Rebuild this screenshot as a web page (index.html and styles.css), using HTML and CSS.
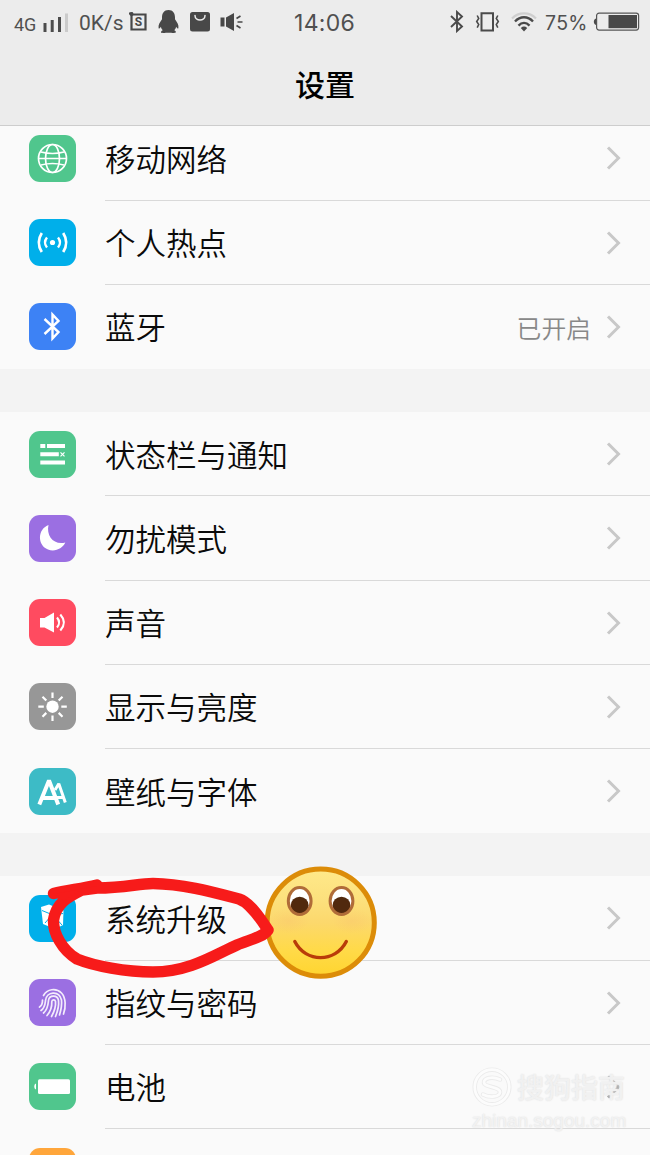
FILE: index.html
```html
<!DOCTYPE html>
<html lang="zh-CN">
<head>
<meta charset="utf-8">
<title>设置</title>
<link rel="stylesheet" href="styles.css">
</head>
<body>
<div class="phone">
  <header class="header">
    <div class="status">
      <div class="status-left">
        <span class="net">4G</span>
        <svg class="signal" width="26" height="20" viewBox="0 0 26 20"><path fill="#4c4c4c" d="M.5 10h3v9h-3zM7.700 7h3v12h-3zM15 4h3v15h-3z"/><path fill="#cbcbcb" d="M22 .5h3V19h-3z"/></svg>
        <span class="rate">0K/s</span>
        <svg class="shot" width="19" height="20" viewBox="0 0 19 20"><path d="M2.500 2.500h14v15h-14zM0 1.500h4" fill="none" stroke="#484848" stroke-width="2.200"/><circle cx="2.500" cy="2" r="2" fill="#484848"/><text x="9.500" y="14.300" text-anchor="middle" class="shot-s">S</text></svg>
        <svg class="qq" width="21" height="24" viewBox="0 0 21 24"><path fill="#484848" d="M10.500 0C6 0 4 3.300 4 7.500v1.700C2 12 0 15 .6 18c.2 1.200 1.500.1 2.200-1.300.3 1.500 1 2.700 2 3.600-2 .7-2.600 2.700.2 2.700 2.300 0 3.700-.2 5.500-.2s3.200.2 5.500.2c2.800 0 2.200-2 .2-2.700 1-.9 1.700-2.100 2-3.600.7 1.400 2 2.500 2.200 1.300.6-3-1.400-6-3.400-8.800V7.500C17 3.300 15 0 10.500 0z"/></svg>
        <svg class="bag" width="20" height="20" viewBox="0 0 20 20"><rect width="20" height="19.500" rx="2.500" fill="#484848"/><path d="M5 3.500c0 6 10 6 10 0" fill="none" stroke="#ececec" stroke-width="1.500" stroke-linecap="round"/></svg>
        <svg class="mute" width="23" height="20" viewBox="0 0 23 20"><path fill="#484848" d="M.5 5.500h4v9h-4zM6 5.500 14 1v18L6 14.500z"/><path d="m16.500 6.500 4-2.500M17.500 10h5M16.500 13.500l4 2.500" stroke="#484848" stroke-width="1.700" fill="none"/></svg>
      </div>
      <span class="clock">14:06</span>
      <div class="status-right">
        <svg class="bt" width="14" height="23" viewBox="0 0 14 23"><path d="m1 6 11 10.500-5 4.500V2l5 4.500L1 17" fill="none" stroke="#4a4a4a" stroke-width="1.900"/></svg>
        <svg class="vib" width="25" height="20" viewBox="0 0 25 20"><path d="M6.500 1.200h11.500v17.300H6.500z" fill="none" stroke="#4a4a4a" stroke-width="2"/><path d="m2.200 3.500 1.500 3-2 3 2 3-1.500 3.200M22.800 3.500l-1.500 3 2 3-2 3 1.500 3.200" fill="none" stroke="#4a4a4a" stroke-width="1.600"/></svg>
        <svg class="wifi" width="26" height="20" viewBox="0 0 26 20"><g fill="none"><path d="M1 6.500C7.500-.3 18.500-.3 25 6.500" stroke="#cfcfcf" stroke-width="2.200"/><path d="M4 9.500C9.100 3.800 16.900 3.800 22 9.500M7.500 13.600c3.300-3.600 7.700-3.600 11 0" stroke="#4a4a4a" stroke-width="2.300"/></g><path d="M9.800 16c2-1.900 4.400-1.900 6.400 0L13 19.500z" fill="#4a4a4a"/></svg>
        <span class="pct">75%</span>
        <svg class="batt" width="47" height="20" viewBox="0 0 47 20"><path d="M3 6.500v6.500C.1 12.500.1 7 3 6.500z" fill="#4a4a4a"/><rect x="3.600" y="1.100" width="42" height="17" rx="2.500" fill="none" stroke="#555" stroke-width="1.200"/><path d="M15.500 3h28.500v13.200H15.500z" fill="#484848"/></svg>
      </div>
    </div>
    <h1 class="title">设置</h1>
  </header>

  <main class="list">
    <section class="group">
      <div class="row"><svg class="icon" viewBox="0 0 47 47"><rect class="green" width="47" height="47" rx="11"/><g fill="none" stroke="#fff" stroke-width="1.700"><circle cx="23.500" cy="23.500" r="14"/><ellipse cx="23.500" cy="23.500" rx="7" ry="14"/><path d="M9.500 23.500h28M12 17q11.500 3 23 0M12 30q11.500-3 23 0"/></g></svg><div class="cell"><span class="name">移动网络</span><svg class="chev" viewBox="0 0 16 24"><path d="m2 1.500 10.500 10.500L2 22.500"/></svg></div></div>
      <div class="row"><svg class="icon" viewBox="0 0 47 47"><rect class="cyan" width="47" height="47" rx="11"/><circle cx="23.500" cy="23.500" r="2.600" fill="#fff"/><g fill="none" stroke="#fff" stroke-width="2.400"><path d="M18 18.500q-4 5 0 10M29 18.500q4 5 0 10"/><path stroke-width="2.700" d="M12.800 14q-6 9.500 0 19M34.200 14q6 9.500 0 19"/></g></svg><div class="cell"><span class="name">个人热点</span><svg class="chev" viewBox="0 0 16 24"><path d="m2 1.500 10.500 10.500L2 22.500"/></svg></div></div>
      <div class="row"><svg class="icon" viewBox="0 0 47 47"><rect class="blue" width="47" height="47" rx="11"/><path d="m15.500 16 14 13-6 6.500V11.500l6 6.500-14 13" fill="none" stroke="#fff" stroke-width="2.400"/></svg><div class="cell"><span class="name">蓝牙</span><span class="value">已开启</span><svg class="chev" viewBox="0 0 16 24"><path d="m2 1.500 10.500 10.500L2 22.500"/></svg></div></div>
    </section>

    <section class="group">
      <div class="row"><svg class="icon" viewBox="0 0 47 47"><rect class="green" width="47" height="47" rx="11"/><path fill="#fff" d="M11.300 13h5v4h-5zM18 13h18v4H18zM11.300 21.300h18.500v4H11.300zM11.300 29.500H36v4H11.300z"/><path d="m31.500 21.300 4 4m0-4-4 4" stroke="#fff" stroke-width="1.200"/></svg><div class="cell"><span class="name">状态栏与通知</span><svg class="chev" viewBox="0 0 16 24"><path d="m2 1.500 10.500 10.500L2 22.500"/></svg></div></div>
      <div class="row"><svg class="icon" viewBox="0 0 47 47"><rect class="purple" width="47" height="47" rx="11"/><path fill="#fff" d="M19.500 10C8 14.500 8.500 30.500 19 34.500c7 2.700 14.500-1 17.300-7C25 30.500 17 21 19.500 10z"/></svg><div class="cell"><span class="name">勿扰模式</span><svg class="chev" viewBox="0 0 16 24"><path d="m2 1.500 10.500 10.500L2 22.500"/></svg></div></div>
      <div class="row"><svg class="icon" viewBox="0 0 47 47"><rect class="red" width="47" height="47" rx="11"/><path fill="#fff" d="M11 19h4.500l9.500-5.500v20L15.500 28.500H11z"/><path d="M28 18.500q4.200 5 0 10M31.300 15.500q7.200 8 0 16" fill="none" stroke="#fff" stroke-width="2.100"/></svg><div class="cell"><span class="name">声音</span><svg class="chev" viewBox="0 0 16 24"><path d="m2 1.500 10.500 10.500L2 22.500"/></svg></div></div>
      <div class="row"><svg class="icon" viewBox="0 0 47 47"><rect class="grey" width="47" height="47" rx="11"/><circle cx="23.500" cy="23.700" r="6.200" fill="#fff"/><path d="M23.500 9.500V15m0 17.500V38M9.300 23.700h5.500m17.500 0h5.500M13.500 13.700l3.800 3.800m12.400 12.400 3.800 3.800m0-20-3.800 3.800M17.300 29.900l-3.800 3.800" stroke="#fff" stroke-width="2.200"/></svg><div class="cell"><span class="name">显示与亮度</span><svg class="chev" viewBox="0 0 16 24"><path d="m2 1.500 10.500 10.500L2 22.500"/></svg></div></div>
      <div class="row"><svg class="icon" viewBox="0 0 47 47"><rect class="teal" width="47" height="47" rx="11"/><g fill="none" stroke="#fff" stroke-linejoin="bevel"><path stroke-width="4" d="m10.300 36.500 9.700-24 9.200 24M13.500 30h13"/><path stroke-width="3" d="m26 22 3.800-6.300 6.500 18.800M27.500 29.500h7"/></g></svg><div class="cell"><span class="name">壁纸与字体</span><svg class="chev" viewBox="0 0 16 24"><path d="m2 1.500 10.500 10.500L2 22.500"/></svg></div></div>
    </section>

    <section class="group">
      <div class="row"><svg class="icon" viewBox="0 0 47 47"><rect class="cyan" width="47" height="47" rx="11"/><path fill="#fff" d="m12 12 8-2.500 14.500 6-.5 14.500-8 4-12-5z"/><path d="m13 15.500 11 4.500 10-1.500M24 20l9 10M23 20l-7 8" fill="none" stroke="#00afea"/></svg><div class="cell"><span class="name">系统升级</span><svg class="chev" viewBox="0 0 16 24"><path d="m2 1.500 10.500 10.500L2 22.500"/></svg></div>
        <svg class="doodle" width="340" height="120" viewBox="45 862 340 120">
          <defs>
            <linearGradient id="face" x1="0" y1="0" x2="0" y2="1"><stop offset="0" stop-color="#ffe98a"/><stop offset=".3" stop-color="#fce07c"/><stop offset=".5" stop-color="#fcd86c"/><stop offset=".75" stop-color="#ffda49"/><stop offset="1" stop-color="#ffd52f"/></linearGradient>
            <radialGradient id="blush"><stop offset="0" stop-color="#f8bd6c" stop-opacity=".3"/><stop offset="1" stop-color="#f8bd6c" stop-opacity="0"/></radialGradient>
          </defs>
          <circle cx="320.700" cy="922.700" r="53.600" fill="url(#face)" stroke="#dc8c08" stroke-width="5"/>
          <ellipse cx="289" cy="921" rx="20" ry="13" fill="url(#blush)"/><ellipse cx="352" cy="921" rx="20" ry="13" fill="url(#blush)"/>
          <g fill="#fff"><ellipse cx="299.700" cy="901" rx="11.700" ry="13.500"/><ellipse cx="341.500" cy="901" rx="11.700" ry="13.500"/></g>
          <circle cx="299.700" cy="905.700" r="9" fill="#51290e"/><circle cx="341.500" cy="905.700" r="9" fill="#51290e"/>
          <g fill="none" stroke="#b06c38" stroke-width="3"><ellipse cx="299.700" cy="901" rx="11.400" ry="13.500"/><ellipse cx="341.500" cy="901" rx="11.400" ry="13.500"/></g>
          <path d="M294.800 941.500c11 21.500 40.500 21.500 51.500 0" fill="none" stroke="#b93b09" stroke-width="3.400" stroke-linecap="round"/>
          <path d="M53.500 893.500C67 890 80 889 97 885L97 888C125 888 138 883.500 153 883.500C185 884 216 893 239 899C251 903 262 921 268 930C262 938 248 940 237 945C216 954 190 972 153 972C126 972 94 966 77 959C62 950 53 933 53.500 920C56 904 66 898 82 890L97 888" fill="none" stroke="#f71b1a" stroke-width="11.400" stroke-linecap="round" stroke-linejoin="round"/>
          <path d="M53.500 894 97 886 82 889 64 901z" fill="#f71b1a"/>
        </svg>
      </div>
      <div class="row"><svg class="icon" viewBox="0 0 47 47"><rect class="purple" width="47" height="47" rx="11"/><g fill="none" stroke="#f3ecfc" stroke-width="1.700" stroke-linecap="round"><path d="M14.500 16.500C18 10 27 8.500 32.500 14c4.500 5 4.500 14 2 21"/><path d="M10.500 28q3-1.500 3-7"/><path d="M12 31.500c4-3 4-6 4.500-10C17.500 12.500 30 11 32.500 21c.7 6-.5 10-2 15"/><path d="M14.500 34c4.500-4 4.500-8 5-12.500.6-5.500 9-6 10 0 .8 6-1 11-3 16"/><path d="M18 36.500c4-4.500 5-10 4.800-14 .1-2.300 3.300-2.300 3.700 0 .5 5-1.500 10.500-4 15"/></g></svg><div class="cell"><span class="name">指纹与密码</span><svg class="chev" viewBox="0 0 16 24"><path d="m2 1.500 10.500 10.500L2 22.500"/></svg></div></div>
      <div class="row"><svg class="icon" viewBox="0 0 47 47"><rect class="green" width="47" height="47" rx="11"/><rect x="9" y="16.200" width="32" height="14.800" rx="1.500" fill="#fff"/><path d="M7 20.500v6c-2.300-.5-2.300-5.500 0-6z" fill="#fff"/></svg><div class="cell"><span class="name">电池</span><svg class="chev dark" viewBox="0 0 16 24"><path d="m2 1.500 10.500 10.500L2 22.500"/></svg></div>
        <div class="mark">
          <div class="mark-top"><svg width="40" height="40" viewBox="0 0 40 40"><g fill="none" stroke-linecap="round"><g stroke="#ebebeb" stroke-width="4.500"><circle cx="20" cy="20" r="17.300"/><path d="M28 12.500C20 9 12 11 12 15.500c0 5 16 4 16 9.500 0 5-10 6-17 2.500"/></g><g stroke="#fcfcfc" stroke-width="2.700"><circle cx="20" cy="20" r="17.300"/><path d="M28 12.500C20 9 12 11 12 15.500c0 5 16 4 16 9.500 0 5-10 6-17 2.500"/></g></g></svg><span class="mark-cn">搜狗指南</span></div>
          <div class="mark-url">zhinan.sogou.com</div>
        </div>
      </div>
      <div class="row"><svg class="icon" viewBox="0 0 47 47"><rect class="orange" width="47" height="47" rx="11"/></svg><div class="cell"></div></div>
    </section>
  </main>
</div>
</body>
</html>
```
FILE: styles.css
```css
* { box-sizing: border-box; }
body { margin: 0; background: #f3f3f3; font-family: "Noto Sans CJK SC", sans-serif; color: #0a0a0a; }
svg { display: block; flex: none; }
.phone { width: 650px; height: 1155px; overflow: hidden; display: flex; flex-direction: column; }

.header { height: 126px; flex: none; background: #ececec; border-bottom: 1px solid #cdcdcd; }
.status { height: 44px; display: flex; justify-content: space-between; position: relative; color: #505050; font-family: Roboto, sans-serif; white-space: nowrap; }
.status-left, .status-right { display: flex; align-items: flex-start; }
.status-left { padding-left: 14px; }
.status-right { padding-right: 10px; }
.net { width: 29px; padding-top: 14px; font-size: 18px; line-height: 21px; }
.signal { margin-top: 13px; }
.rate { width: 50px; margin-left: 10px; padding-top: 11px; font-size: 21px; line-height: 24px; }
.shot { margin-top: 12px; }
.shot-s { font: bold 12px Roboto, sans-serif; fill: #484848; }
.qq { margin: 10px 0 0 10px; }
.bag { margin: 12px 0 0 11px; }
.mute { margin: 12px 0 0 10px; }
.clock { position: absolute; left: 294px; top: 9px; font-family: Inter, sans-serif; font-size: 23px; line-height: 28px; letter-spacing: .3px; }
.bt { margin-top: 10px; }
.vib { margin: 12px 0 0 11px; }
.wifi { margin: 12px 0 0 11px; }
.pct { width: 48px; margin-left: 8px; padding-top: 10px; font-family: Inter, sans-serif; font-size: 19.500px; line-height: 26px; letter-spacing: .3px; }
.batt { margin-top: 12px; }
.title { margin: 17px 0 0; font-size: 30px; line-height: 44px; font-weight: 500; text-align: center; color: #000; }

.list { flex: 1; overflow: hidden; display: flex; flex-direction: column; gap: 43px; }
.group { flex: none; background: #fafafa; }
.group:first-child { margin-top: -9.750px; }
.row { position: relative; height: 84.250px; padding-left: 29px; display: flex; align-items: center; gap: 29px; }
.icon { width: 47px; height: 47px; }
.cell { flex: 1; height: 100%; padding-right: 28px; display: flex; align-items: center; border-bottom: 1px solid #d9d9d9; }
.row:last-child .cell { border-bottom-color: transparent; }
.name { flex: 1; font-size: 30.500px; line-height: 44px; font-weight: 350; }
.value { font-size: 24.800px; line-height: 36px; font-weight: 350; margin-right: 15px; padding-top: 1px; color: #888; }
.chev { width: 16px; height: 24px; margin-top: 1px; fill: none; stroke: #c8c8c8; stroke-width: 3; }
.chev.dark { stroke: #a8a8a8; }

.green { fill: #50c68d; }
.cyan { fill: #00afea; }
.blue { fill: #3d82f5; }
.purple { fill: #9b6fe2; }
.red { fill: #ff4b60; }
.grey { fill: #979797; }
.teal { fill: #3dbbc6; }
.orange { fill: #ffa63b; }

/* hand-drawn circle and smiley lying over the row */
.doodle { position: absolute; left: 45px; top: -14px; z-index: 2; }

.mark { position: absolute; left: 472px; top: 20px; width: 160px; color: #fbfbfb99; text-shadow: 0 0 2px #e2e2e2, 0 0 1px #e6e6e6; }
.mark-top { display: flex; align-items: center; gap: 5px; height: 44px; }
.mark-cn { font-size: 27px; line-height: 40px; font-weight: 500; }
.mark-url { font: 19px/24px "Liberation Sans", sans-serif; }
```
